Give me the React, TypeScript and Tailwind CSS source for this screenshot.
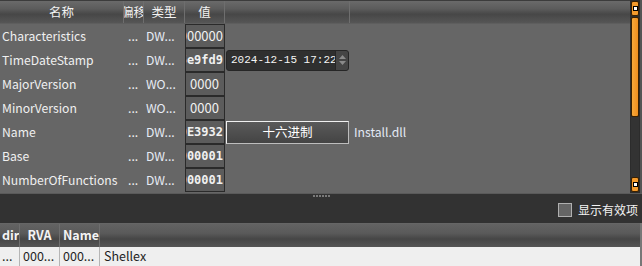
import React from "react";

const FONT = { fontFamily: '"Noto Sans CJK SC", "Noto Sans", sans-serif' };

type Row = { name: string; type: string; val: string; bold?: boolean; align?: "right" | "center" };

const rows: Row[] = [
  { name: "Characteristics", type: "DW...", val: "00000000", align: "right" },
  { name: "TimeDateStamp", type: "DW...", val: "675e9fd9", bold: true, align: "right" },
  { name: "MajorVersion", type: "WO...", val: "0000", align: "center" },
  { name: "MinorVersion", type: "WO...", val: "0000", align: "center" },
  { name: "Name", type: "DW...", val: "000E3932", bold: true, align: "right" },
  { name: "Base", type: "DW...", val: "00000001", bold: true, align: "right" },
  { name: "NumberOfFunctions", type: "DW...", val: "00000001", bold: true, align: "right" },
];

function HeaderCell({ w, children, last }: { w: string; children?: React.ReactNode; last?: boolean }) {
  return (
    <div
      className={`${w} h-full flex items-center justify-center overflow-hidden whitespace-nowrap text-[12.5px] text-[#f2f2f2] ${last ? "" : "border-r border-[#6e6e6e]"}`}
    >
      {children}
    </div>
  );
}

export default function App() {
  return (
    <div className="w-[642px] h-[266px] bg-[#333] overflow-hidden relative" style={FONT}>
      {/* top panel */}
      <div className="h-[193px] flex bg-[#666]">
        <div className="w-[632px] h-full flex flex-col">
          {/* header */}
          <div className="h-[24px] flex border-t border-[#3c3c3c] bg-[linear-gradient(#6a6a6a,#5c5c5c_35%,#474747_60%,#565656)] border-b border-b-[#5e5e5e]">
            <HeaderCell w="w-[124px]">名称</HeaderCell>
            <HeaderCell w="w-[20px]"><span className="shrink-0">偏移</span></HeaderCell>
            <HeaderCell w="w-[41px]">类型</HeaderCell>
            <HeaderCell w="w-[40px]">值</HeaderCell>
            <HeaderCell w="w-[125px]" />
            <HeaderCell w="flex-1" last />
          </div>
          {/* rows */}
          {rows.map((r, i) => (
            <div key={i} className="h-[24px] flex items-center text-[12.2px] text-[#f0f0f0] whitespace-nowrap">
              <div className="w-[124px] pl-[2px] overflow-hidden">{r.name}</div>
              <div className="w-[20px] pl-[4px] overflow-hidden">...</div>
              <div className="w-[41px] pl-[2px] overflow-hidden text-[#e6ecf5]">{r.type}</div>
              <div
                className={`w-[40px] h-[24px] border border-[#2a2a2a] bg-[#5c5c5c] flex items-center overflow-hidden ${
                  r.align === "center" ? "justify-center" : "justify-end"
                } pr-[1px]`}
                style={r.bold ? { fontFamily: '"DejaVu Sans Mono", monospace', fontSize: 12, fontWeight: 700 } : { fontSize: 13 }}
              >
                <span className="shrink-0">{r.val}</span>
              </div>
              <div className="w-[125px] h-full flex items-center">
                {i === 1 && (
                  <div className="w-[123px] h-[21px] ml-[1px] rounded-[3px] bg-[#2f2f2f] border border-[#262626] flex items-center overflow-hidden">
                    <div
                      className="flex-1 pl-[4px] text-[11px] text-[#f5f5f5] overflow-hidden whitespace-nowrap"
                      style={{ fontFamily: '"Liberation Mono", monospace' }}
                    >
                      2024-12-15 17:22:
                    </div>
                    <div className="w-[13px] h-full bg-[#454545] border-l border-[#262626] flex flex-col items-center justify-center gap-[2px]">
                      <svg width="7" height="4" viewBox="0 0 7 4"><path d="M0 4 L3.5 0 L7 4Z" fill="#8a8a8a" /></svg>
                      <svg width="7" height="4" viewBox="0 0 7 4"><path d="M0 0 L3.5 4 L7 0Z" fill="#8a8a8a" /></svg>
                    </div>
                  </div>
                )}
                {i === 4 && (
                  <div className="w-[123px] h-[23px] ml-[1px] border border-t-[#f0f0f0] border-l-[#f0f0f0] border-r-[#bdbdbd] border-b-[#bdbdbd] bg-[linear-gradient(#5a5a5a,#444)] flex items-center justify-center text-[12.5px] text-white">
                    十六进制
                  </div>
                )}
              </div>
              <div className="flex-1 pl-[4px] text-[#e3e9f5]">{i === 4 ? "Install.dll" : ""}</div>
            </div>
          ))}
        </div>
        {/* scrollbar */}
        <div className="w-[10px] h-full bg-[#2c2c2c] flex flex-col items-center px-[1px] py-[1px]">
          <div className="w-[8px] h-[15px] rounded-[2px] bg-[#f39a2c] border border-[#3a2000] flex items-center justify-center">
            <div className="w-[3px] h-[3px] bg-white border border-black box-content" />
          </div>
          <div className="w-[8px] h-[100px] mt-[1px] rounded-[2px] bg-[linear-gradient(90deg,#f7a83a,#ef8f1e)] border border-[#3a2000]" />
          <div className="w-[8px] flex-1 bg-[#333]" />
          <div className="w-[8px] h-[15px] rounded-[2px] bg-[#f39a2c] border border-[#3a2000] flex items-center justify-center">
            <div className="w-[3px] h-[3px] bg-white border border-black box-content" />
          </div>
        </div>
        <div className="w-[2px] h-full bg-[#555]" />
      </div>

      {/* splitter */}
      <div className="h-[30px] bg-[#323232] border-t border-[#5a5a5a] relative flex items-center justify-end pr-[4px]">
        <div className="absolute left-[313px] top-[1px] flex gap-[1px]">
          {[0, 1, 2, 3, 4, 5].map((k) => (
            <div key={k} className="w-[2px] h-[2px] bg-[#7a7a7a]" />
          ))}
        </div>
        <div className="flex items-center gap-[6px] mt-[2px]">
          <div className="w-[14px] h-[14px] border border-[#b0b0b0] bg-[#666]" />
          <span className="text-[12px] text-[#f4f4f4]">显示有效项</span>
        </div>
      </div>

      {/* bottom panel */}
      <div className="h-[43px] flex flex-col border-r-2 border-[#777]">
        <div className="h-[24px] flex border-t border-[#666] bg-[linear-gradient(#636363,#5a5a5a_40%,#464646_65%,#555)] font-bold text-[12.5px] text-[#f4f4f4]">
          <div className="w-[20px] h-full border-r border-[#6e6e6e] flex items-center overflow-hidden whitespace-nowrap pl-[2px]">dir</div>
          <div className="w-[40px] h-full border-r border-[#6e6e6e] flex items-center justify-center">RVA</div>
          <div className="w-[40px] h-full border-r border-[#6e6e6e] flex items-center overflow-hidden whitespace-nowrap pl-[3px]">Name</div>
          <div className="flex-1" />
        </div>
        <div className="flex-1 flex bg-[#efefef] text-[12.5px] text-[#1e1e1e] whitespace-nowrap">
          <div className="w-[20px] border-r border-[#b5b5b5] pl-[2px] overflow-hidden">...</div>
          <div className="w-[40px] border-r border-[#b5b5b5] pl-[3px] overflow-hidden">000...</div>
          <div className="w-[40px] border-r border-[#b5b5b5] pl-[3px] overflow-hidden">000...</div>
          <div className="flex-1 pl-[4px]">Shellex</div>
        </div>
      </div>
    </div>
  );
}
